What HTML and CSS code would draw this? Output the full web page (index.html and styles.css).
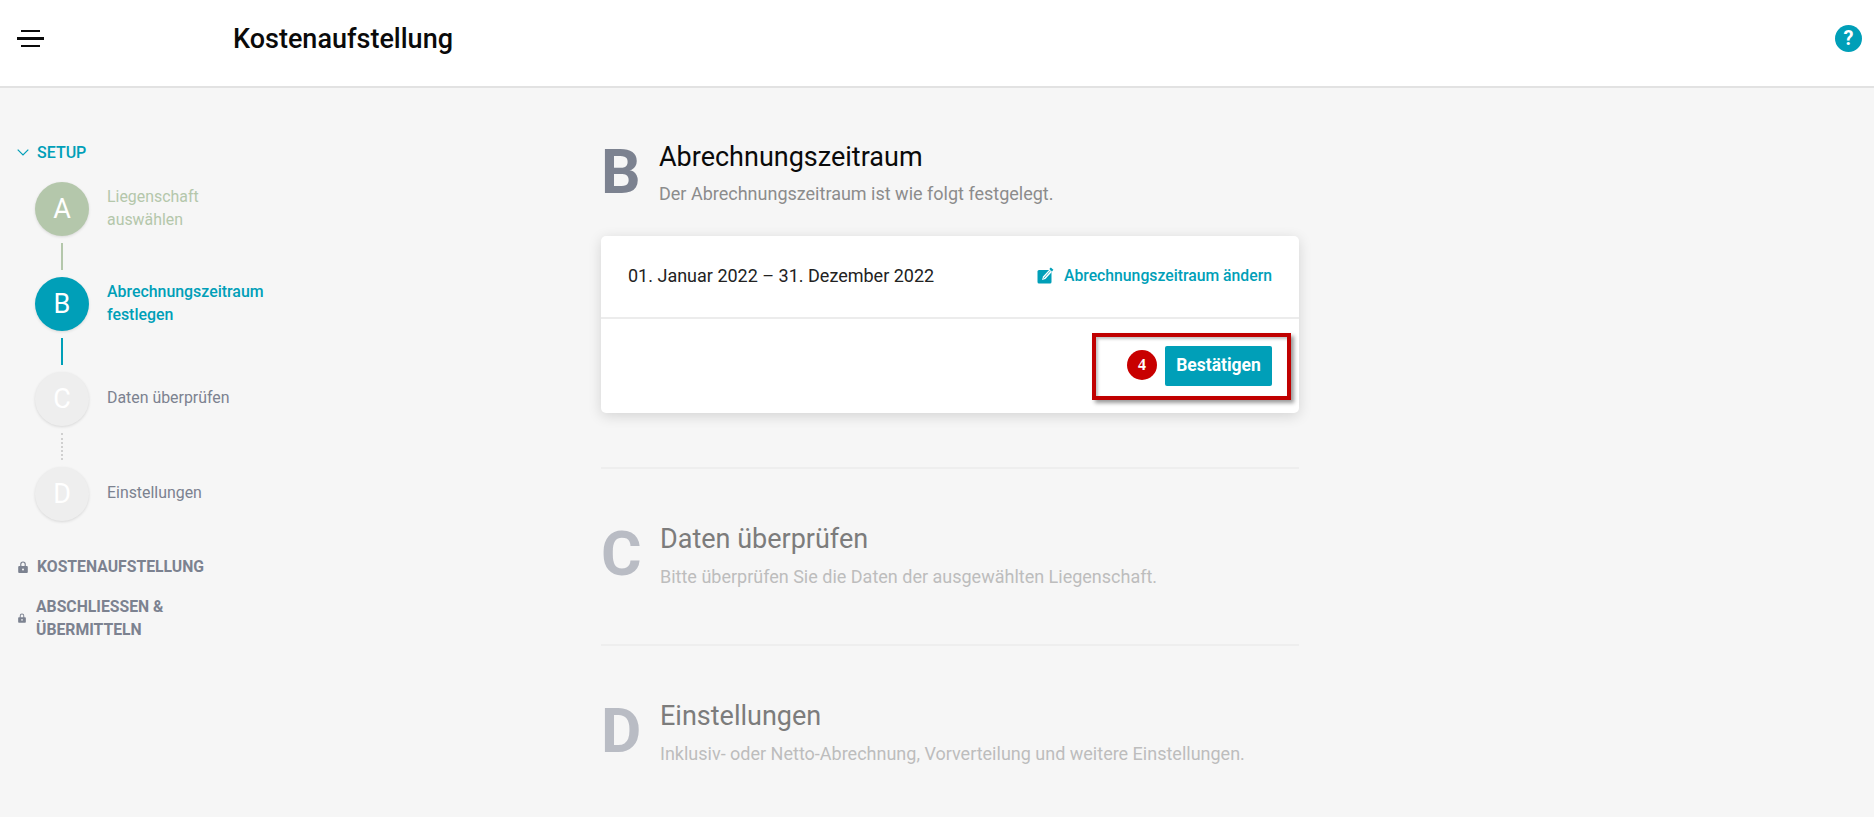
FILE: index.html
```html
<!DOCTYPE html>
<html lang="de">
<head>
    <meta charset="UTF-8">
    <meta name="viewport" content="width=device-width, initial-scale=1.0">
    <title>Kostenaufstellung</title>
    <link rel="stylesheet" href="styles.css">
</head>
<body>
    <header class="topbar">
        <div class="burger">
            <span class="burger-short"></span>
            <span class="burger-long"></span>
            <span class="burger-short"></span>
        </div>
        <h1 class="page-title">Kostenaufstellung</h1>
        <div class="help">?</div>
    </header>

    <div class="layout">
        <aside class="sidebar">
            <div class="nav-head active">
                <svg class="chevron" width="12" height="7" viewBox="0 0 12 7"><path d="M0.7 0.7 L6 6 L11.3 0.7" fill="none" stroke="#009fb8" stroke-width="1.2"/></svg>
                <span>SETUP</span>
            </div>

            <div class="steps">
                <div class="step done">
                    <div class="circle">A</div>
                    <div class="step-label">Liegenschaft<br>auswählen</div>
                </div>
                <div class="line line-done"></div>
                <div class="step current">
                    <div class="circle">B</div>
                    <div class="step-label">Abrechnungszeitraum<br>festlegen</div>
                </div>
                <div class="line line-current"></div>
                <div class="step">
                    <div class="circle">C</div>
                    <div class="step-label single">Daten überprüfen</div>
                </div>
                <div class="line line-open"></div>
                <div class="step">
                    <div class="circle">D</div>
                    <div class="step-label single">Einstellungen</div>
                </div>
            </div>

            <div class="nav-head locked first-locked">
                <svg class="lock" width="10" height="12" viewBox="0 0 10 12"><path d="M2.2 5 V3.2 A2.8 2.8 0 0 1 7.8 3.2 V5 M1.2 5 H8.8 A1 1 0 0 1 9.8 6 V11 A1 1 0 0 1 8.8 12 H1.2 A1 1 0 0 1 0.2 11 V6 A1 1 0 0 1 1.2 5 Z" fill="#7c8290"/><path d="M3.4 5 V3.2 A1.6 1.6 0 0 1 6.6 3.2 V5 Z" fill="#f6f6f6"/><circle cx="5" cy="8.4" r="1" fill="#f6f6f6"/></svg>
                <span>KOSTENAUFSTELLUNG</span>
            </div>
            <div class="nav-head locked second-locked">
                <svg class="lock" width="8" height="10" viewBox="0 0 10 12"><path d="M2.2 5 V3.2 A2.8 2.8 0 0 1 7.8 3.2 V5 M1.2 5 H8.8 A1 1 0 0 1 9.8 6 V11 A1 1 0 0 1 8.8 12 H1.2 A1 1 0 0 1 0.2 11 V6 A1 1 0 0 1 1.2 5 Z" fill="#7c8290"/><path d="M3.4 5 V3.2 A1.6 1.6 0 0 1 6.6 3.2 V5 Z" fill="#f6f6f6"/><circle cx="5" cy="8.4" r="1" fill="#f6f6f6"/></svg>
                <span>ABSCHLIESSEN &amp;<br>ÜBERMITTELN</span>
            </div>
        </aside>

        <main class="content">
            <section class="block">
                <div class="block-head">
                    <div class="block-letter">B</div>
                    <div>
                        <h2 class="block-title">Abrechnungszeitraum</h2>
                        <p class="block-sub">Der Abrechnungszeitraum ist wie folgt festgelegt.</p>
                    </div>
                </div>

                <div class="card">
                    <div class="card-top">
                        <span class="period">01. Januar 2022 – 31. Dezember 2022</span>
                        <a class="edit-link">
                            <svg width="18" height="17" viewBox="0 0 18 17">
                                <rect x="0.5" y="3" width="14" height="13.5" rx="1.5" fill="#009fb8"/>
                                <path d="M5 13 L6 9.5 L12.5 2.5 L15 4.8 L8.4 12 Z" fill="#fff"/>
                                <path d="M6.6 11.4 L13 4.2" stroke="#009fb8" stroke-width="0.8" fill="none"/>
                                <path d="M12.3 2 L13.8 0.4 L16.4 2.8 L15 4.4 Z" fill="#009fb8"/>
                            </svg>
                            Abrechnungszeitraum ändern
                        </a>
                    </div>
                    <div class="card-bottom">
                        <div class="badge">4</div>
                        <button class="confirm" type="button">Bestätigen</button>
                        <div class="callout"></div>
                    </div>
                </div>
            </section>

            <section class="block block-off">
                <div class="block-head">
                    <div class="block-letter">C</div>
                    <div>
                        <h2 class="block-title">Daten überprüfen</h2>
                        <p class="block-sub">Bitte überprüfen Sie die Daten der ausgewählten Liegenschaft.</p>
                    </div>
                </div>
            </section>

            <section class="block block-off">
                <div class="block-head">
                    <div class="block-letter">D</div>
                    <div>
                        <h2 class="block-title">Einstellungen</h2>
                        <p class="block-sub">Inklusiv- oder Netto-Abrechnung, Vorverteilung und weitere Einstellungen.</p>
                    </div>
                </div>
            </section>
        </main>
    </div>
</body>
</html>
```

FILE: styles.css
```css
html, body {
    height: 100%;
}

body {
    margin: 0;
    font-family: Roboto, "Liberation Sans", sans-serif;
    background-color: #f6f6f6;
    overflow: hidden;
}

.topbar {
    display: flex;
    align-items: center;
    height: 77px;
    padding: 0 12px 9px 17px;
    background-color: #fff;
    border-bottom: 2px solid #e2e2e2;
}

.burger {
    display: flex;
    flex-direction: column;
    align-items: center;
    gap: 5px;
    width: 27px;
    margin-right: 189px;
}

.burger span {
    display: block;
    height: 2.5px;
    background-color: #0a0a0a;
}

.burger-short {
    width: 19px;
}

.burger-long {
    width: 27px;
}

.page-title {
    margin: 0;
    font-size: 27px;
    font-weight: 500;
    color: #0a0a0a;
}

.help {
    width: 27px;
    height: 27px;
    margin-left: auto;
    border-radius: 50%;
    background-color: #009fb8;
    color: #fff;
    font-size: 20px;
    font-weight: 700;
    line-height: 27px;
    text-align: center;
}

.layout {
    display: flex;
}

.sidebar {
    width: 601px;
    padding-top: 53px;
    box-sizing: border-box;
}

.nav-head {
    display: flex;
    align-items: center;
    padding-left: 17px;
    font-size: 16px;
    font-weight: 500;
    line-height: 23px;
}

.nav-head.active {
    color: #009fb8;
}

.nav-head.locked {
    color: #7c8290;
    font-size: 15.75px;
    font-weight: 700;
}

.chevron {
    margin-right: 8px;
}

.first-locked {
    margin-top: 34px;
    padding-left: 18px;
}

.first-locked .lock {
    margin-right: 9px;
}

.second-locked {
    margin-top: 17px;
    padding-left: 18px;
}

.second-locked .lock {
    margin-right: 10px;
}

.steps {
    margin: 18px 0 0 35px;
}

.step {
    display: flex;
    align-items: center;
    gap: 18px;
}

.circle {
    flex: none;
    width: 54px;
    height: 54px;
    border-radius: 50%;
    background-color: #eeeeee;
    box-shadow: 0 1px 3px rgba(0, 0, 0, 0.12);
    color: #fff;
    font-size: 27px;
    line-height: 54px;
    text-align: center;
}

.step-label {
    padding-bottom: 2px;
    font-size: 15.9px;
    line-height: 23px;
    color: #7c8290;
}

.step-label.single {
    padding-bottom: 3px;
}

.done .circle {
    background-color: #b4c7ab;
}

.done .step-label {
    color: #b4c7ab;
}

.current .circle {
    background-color: #009fb8;
}

.current .step-label {
    color: #009fb8;
    font-weight: 500;
}

.line {
    width: 0;
    height: 27px;
    margin: 7px 0 7px 26px;
    border-left: 2px solid;
}

.line-done {
    border-color: #b4c7ab;
}

.line-current {
    border-color: #009fb8;
}

.line-open {
    border-left: 2px dotted #d0d0d0;
}

.content {
    width: 698px;
    padding-top: 53px;
}

.block + .block {
    margin-top: 54px;
    padding-top: 54px;
    border-top: 2px solid #eeeeee;
}

.block-head {
    display: flex;
}

.block-letter {
    width: 58px;
    font-size: 62px;
    font-weight: 700;
    line-height: 62px;
    color: #7c8290;
}

.block-title {
    margin: 0;
    font-size: 27px;
    font-weight: 400;
    line-height: 32px;
    color: #0a0a0a;
}

.block-sub {
    margin: 8px 0 0;
    font-size: 18px;
    line-height: 26px;
    color: #8c8c8c;
}

.block-off .block-letter {
    width: 59px;
    color: #b9bcc4;
}

.block-off .block-title {
    color: #7c7c7c;
}

.block-off .block-sub {
    margin-top: 9px;
    color: #bdbdbd;
}

.card {
    margin-top: 29px;
    background-color: #fff;
    border-radius: 5px;
    box-shadow: 0 3px 14px rgba(0, 0, 0, 0.14);
}

.card-top {
    display: flex;
    justify-content: space-between;
    align-items: center;
    height: 79px;
    padding: 0 27px 2px;
    border-bottom: 2px solid #ececec;
}

.period {
    font-size: 18px;
    color: #222;
}

.edit-link {
    display: flex;
    align-items: center;
    gap: 9px;
    font-size: 15.75px;
    font-weight: 500;
    color: #009fb8;
}

.card-bottom {
    position: relative;
    display: flex;
    justify-content: flex-end;
    align-items: center;
    gap: 8px;
    padding: 27px;
}

.badge {
    width: 30px;
    height: 30px;
    margin-bottom: 2px;
    border-radius: 50%;
    background-color: #c80000;
    color: #fff;
    font-family: "Liberation Serif", serif;
    font-size: 16px;
    font-weight: 700;
    line-height: 30px;
    text-align: center;
}

.confirm {
    width: 107px;
    height: 40px;
    padding: 0 0 2px;
    border: none;
    border-radius: 2px;
    background-color: #009fb8;
    color: #fff;
    font-family: inherit;
    font-size: 17.5px;
    font-weight: 700;
}

.callout {
    position: absolute;
    top: 14px;
    right: 8px;
    width: 199px;
    height: 67px;
    box-sizing: border-box;
    border: 4px solid #c00000;
    box-shadow: 3px 3px 4px rgba(0, 0, 0, 0.4), inset 2px 2px 3px rgba(0, 0, 0, 0.25);
}
```
